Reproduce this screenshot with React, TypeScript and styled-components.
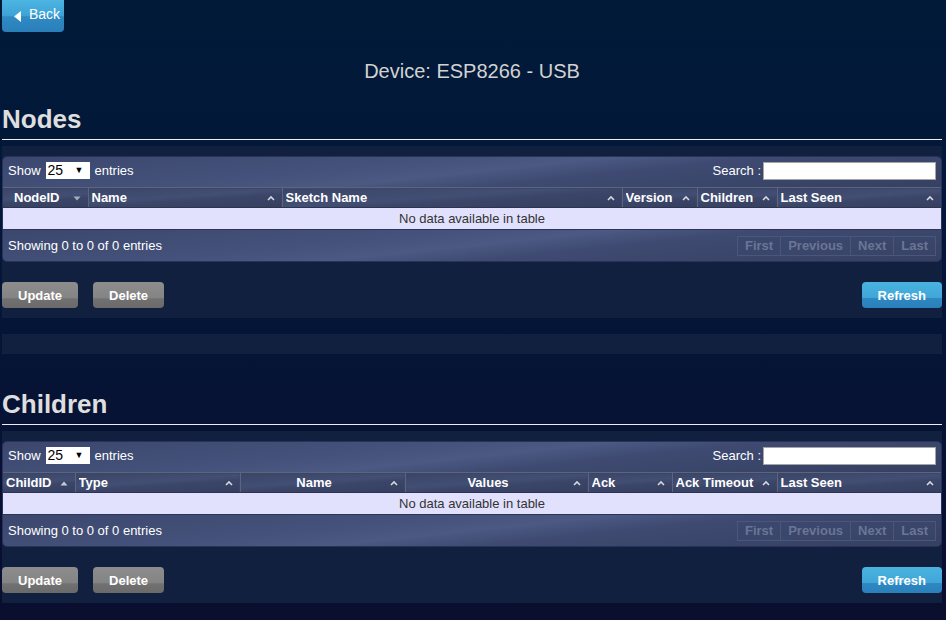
import React from 'react';
import styled, { createGlobalStyle } from 'styled-components';

const GlobalStyle = createGlobalStyle`
  html, body { margin: 0; padding: 0; }
  body { background: #0a0d2e; font-family: "Liberation Sans", Arial, sans-serif; }
  #root { min-height: 100vh; }
`;

const Page = styled.div`
  min-height: 620px;
  box-sizing: border-box;
  padding: 0 4px 12px 2px;
  background: linear-gradient(180deg, #011a38 0%, #03173a 35%, #0a0e2f 100%);
  font-family: "Liberation Sans", Arial, sans-serif;
`;

const TopBar = styled.div`
  display: flex;
  height: 32px;
`;

const BackButton = styled.button`
  display: inline-flex;
  align-items: center;
  gap: 8px;
  height: 32px;
  width: 62px;
  box-sizing: border-box;
  padding: 0 0 4px 12px;
  border: none;
  border-radius: 0 0 4px 4px;
  color: #fff;
  font: 14px "Liberation Sans", Arial, sans-serif;
  background: linear-gradient(180deg, #4cb5e1 0%, #3ea2d6 50%, #2f8ac4 52%, #2a7fba 100%);
  cursor: pointer;
`;

const BackArrow = styled.svg`
  margin-top: 5px;
  flex: none;
`;

const Title = styled.div`
  margin-top: 27px;
  text-align: center;
  font-size: 20px;
  line-height: 24px;
  color: #d2d2d2;
`;

const SectionHeading = styled.h2<{ $top: number }>`
  margin: ${(p) => p.$top}px 0 6px;
  padding-bottom: 5px;
  border-bottom: 1px solid #eeeeee;
  font-size: 26px;
  line-height: 30px;
  font-weight: bold;
  color: #dedede;
`;

const Panel = styled.section`
  background: #12203f;
  padding: 10px 0;
`;

const Spacer = styled.div`
  margin-top: 16px;
  height: 20px;
  background: #12203f;
`;

const TableWrapper = styled.div`
  border: 1px solid #29335a;
  border-radius: 5px;
  overflow: hidden;
  color: #fff;
  font-size: 13px;
`;

const gloss = `
  background: linear-gradient(174deg, #3b476d 0%, #44517a 35%, #4b5983 50%, #3e4a71 62%, #354062 100%);
`;

const Toolbar = styled.div`
  height: 30px;
  box-sizing: border-box;
  padding: 0 5px 3px;
  display: flex;
  align-items: center;
  justify-content: space-between;
  ${gloss}
`;

const Footer = styled.div`
  height: 31px;
  display: flex;
  align-items: center;
  justify-content: space-between;
  padding: 0 5px;
  ${gloss}
`;

const Group = styled.label<{ $gap: number }>`
  display: flex;
  align-items: center;
  gap: ${(p) => p.$gap}px;
`;

const SelectBox = styled.span`
  display: inline-flex;
  align-items: center;
  justify-content: space-between;
  width: 44px;
  height: 17px;
  box-sizing: border-box;
  padding: 0 6px 0 2px;
  background: #fff;
  color: #000;
  font-size: 14px;
  line-height: 17px;
`;

const Arrow = styled.span`
  font-size: 9px;
  line-height: 17px;
`;

const SearchInput = styled.input`
  width: 173px;
  height: 18px;
  box-sizing: border-box;
  margin: 1px 0 0;
  border: 1px solid #a5a5a5;
  background: #fff;
  padding: 0 3px;
  font: 13px "Liberation Sans", Arial, sans-serif;
`;

const Table = styled.table`
  width: 100%;
  border-collapse: collapse;
  table-layout: fixed;
`;

const Th = styled.th<{ $align: 'left' | 'center' }>`
  height: 19px;
  padding: 0 7px 0 3px;
  border: 1px solid #5e6479;
  border-bottom-color: #2c3450;
  background: linear-gradient(176deg, #3a4568 0%, #424e73 45%, #3a4568 60%, #343f60 100%);
  color: #fff;
  font-size: 13px;
  font-weight: bold;
  line-height: 18px;
  text-align: ${(p) => p.$align};
  &:first-child { border-left: none; }
  &:last-child { border-right: none; }
`;

const ThInner = styled.div`
  display: flex;
  align-items: center;
`;

const ThLabel = styled.span<{ $align: 'left' | 'center' }>`
  flex: 1;
  min-width: 0;
  white-space: nowrap;
  overflow: hidden;
  padding-right: 5px;
  text-align: ${(p) => p.$align};
`;

const IconBox = styled.span`
  display: inline-flex;
  width: 8px;
  height: 6px;
  flex: none;
`;

const EmptyCell = styled.td`
  height: 21px;
  padding: 0;
  background: #e1e1fd;
  border-bottom: 1px solid #2e3552;
  color: #333;
  font-size: 13px;
  text-align: center;
`;

const Pager = styled.div`
  display: flex;
`;

const PageButton = styled.span`
  height: 20px;
  box-sizing: border-box;
  padding: 0 7px;
  border: 1px solid #4b567a;
  margin-left: -1px;
  background: rgba(60, 72, 110, 0.35);
  color: #6b7595;
  font-weight: bold;
  font-size: 13px;
  line-height: 18px;
`;

const ButtonRow = styled.div`
  display: flex;
  gap: 15px;
  margin-top: 20px;
`;

const ActionButton = styled.button<{ $variant: 'gray' | 'blue'; $push?: boolean }>`
  height: 26px;
  padding: 0 16px;
  border: none;
  border-radius: 4px;
  color: #fff;
  font: bold 13px "Liberation Sans", Arial, sans-serif;
  margin-left: ${(p) => (p.$push ? 'auto' : '0')};
  background: ${(p) =>
    p.$variant === 'gray'
      ? 'linear-gradient(180deg, #8d8d8d 0%, #848484 62%, #717171 64%, #6a6a6a 100%)'
      : 'linear-gradient(180deg, #4ab3df 0%, #40a6d8 60%, #2e88c2 62%, #2a80bb 100%)'};
  cursor: pointer;
`;

type SortKind = 'both' | 'asc' | 'desc';

const SortIcon = ({ kind }: { kind: SortKind }) => (
  <IconBox>
    <svg width="8" height="6" viewBox="0 0 8 6">
      {kind === 'both' && (
        <polyline points="1,5 4,2 7,5" fill="none" stroke="#d6d8e0" strokeWidth="1.6" />
      )}
      {kind === 'asc' && <polygon points="0.5,5.5 4,1.5 7.5,5.5" fill="#c9cbd3" />}
      {kind === 'desc' && <polygon points="0.5,1.5 7.5,1.5 4,5.5" fill="#a9adbb" />}
    </svg>
  </IconBox>
);

type Column = { label: string; width: number; align: 'left' | 'center'; sort: SortKind };

const nodeColumns: Column[] = [
  { label: 'NodeID', width: 85, align: 'center', sort: 'desc' },
  { label: 'Name', width: 194, align: 'left', sort: 'both' },
  { label: 'Sketch Name', width: 340, align: 'left', sort: 'both' },
  { label: 'Version', width: 75, align: 'left', sort: 'both' },
  { label: 'Children', width: 80, align: 'left', sort: 'both' },
  { label: 'Last Seen', width: 164, align: 'left', sort: 'both' },
];

const childColumns: Column[] = [
  { label: 'ChildID', width: 72, align: 'left', sort: 'asc' },
  { label: 'Type', width: 165, align: 'left', sort: 'both' },
  { label: 'Name', width: 165, align: 'center', sort: 'both' },
  { label: 'Values', width: 183, align: 'center', sort: 'both' },
  { label: 'Ack', width: 84, align: 'left', sort: 'both' },
  { label: 'Ack Timeout', width: 105, align: 'left', sort: 'both' },
  { label: 'Last Seen', width: 164, align: 'left', sort: 'both' },
];

const DataTable = ({ columns }: { columns: Column[] }) => (
  <TableWrapper>
    <Toolbar>
      <Group $gap={5}>
        Show
        <SelectBox>
          25<Arrow>▼</Arrow>
        </SelectBox>
        entries
      </Group>
      <Group $gap={2}>
        Search :<SearchInput type="text" />
      </Group>
    </Toolbar>
    <Table>
      <colgroup>
        {columns.map((c, i) => (
          <col key={i} style={{ width: c.width }} />
        ))}
      </colgroup>
      <thead>
        <tr>
          {columns.map((c, i) => (
            <Th key={i} $align={c.align}>
              <ThInner>
                <ThLabel $align={c.align}>{c.label}</ThLabel>
                <SortIcon kind={c.sort} />
              </ThInner>
            </Th>
          ))}
        </tr>
      </thead>
      <tbody>
        <tr>
          <EmptyCell colSpan={columns.length}>No data available in table</EmptyCell>
        </tr>
      </tbody>
    </Table>
    <Footer>
      <span>Showing 0 to 0 of 0 entries</span>
      <Pager>
        <PageButton>First</PageButton>
        <PageButton>Previous</PageButton>
        <PageButton>Next</PageButton>
        <PageButton>Last</PageButton>
      </Pager>
    </Footer>
  </TableWrapper>
);

const Section = ({ columns }: { columns: Column[] }) => (
  <Panel>
    <DataTable columns={columns} />
    <ButtonRow>
      <ActionButton $variant="gray">Update</ActionButton>
      <ActionButton $variant="gray">Delete</ActionButton>
      <ActionButton $variant="blue" $push>
        Refresh
      </ActionButton>
    </ButtonRow>
  </Panel>
);

export default function App() {
  return (
    <>
      <GlobalStyle />
      <Page>
        <TopBar>
          <BackButton>
            <BackArrow width="7" height="11" viewBox="0 0 7 11">
              <polygon points="7,0 7,11 0,5.5" fill="#fff" />
            </BackArrow>
            Back
          </BackButton>
        </TopBar>
        <Title>Device: ESP8266 - USB</Title>
        <SectionHeading $top={21}>Nodes</SectionHeading>
        <Section columns={nodeColumns} />
        <Spacer />
        <SectionHeading $top={35}>Children</SectionHeading>
        <Section columns={childColumns} />
      </Page>
    </>
  );
}
